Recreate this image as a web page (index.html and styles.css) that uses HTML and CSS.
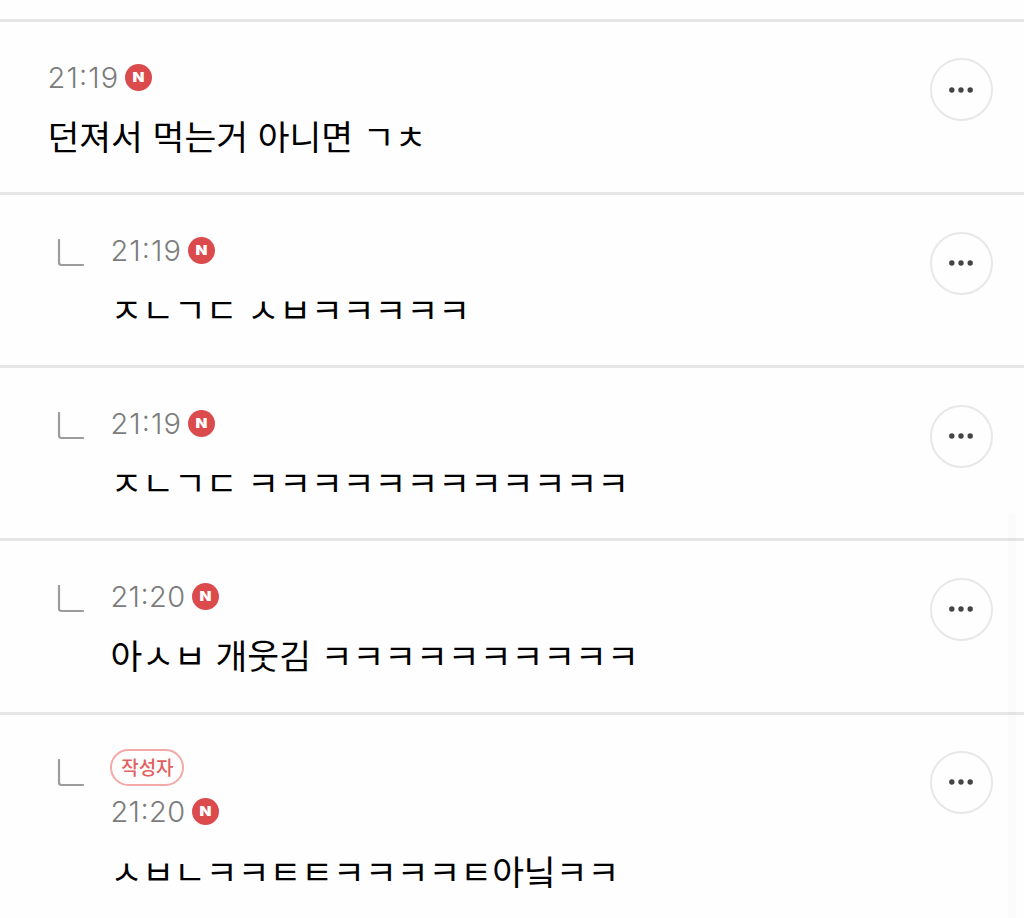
FILE: index.html
```
<!DOCTYPE html>
<html lang="ko">
<head>
    <meta charset="UTF-8">
    <title>댓글</title>
    <link rel="stylesheet" href="styles.css">
</head>
<body>
    <svg class="symbols">
        <symbol id="reply" viewBox="0 0 27 28">
            <path d="M2 1V23.5Q2 26 4.5 26H26" fill="none" stroke="#9c9c9c" stroke-width="2.2" stroke-linecap="round"/>
        </symbol>
        <symbol id="more" viewBox="0 0 26 6">
            <g fill="#444"><circle cx="3.8" cy="3" r="2.7"/><circle cx="13" cy="3" r="2.7"/><circle cx="22.2" cy="3" r="2.7"/></g>
        </symbol>
    </svg>
    <ul class="comment_list">
        <li>
            <div class="comment">
                <p class="info"><span class="time narrow">21:19</span><span class="new"><b>N</b></span></p>
                <p class="text">던져서 먹는거 아니면 ㄱㅊ</p>
            </div>
            <a class="more_btn"><svg><use href="#more"/></svg></a>
        </li>
        <li class="reply">
            <svg class="reply_icon"><use href="#reply"/></svg>
            <div class="comment">
                <p class="info"><span class="time narrow">21:19</span><span class="new"><b>N</b></span></p>
                <p class="text">ㅈㄴㄱㄷ ㅅㅂㅋㅋㅋㅋㅋ</p>
            </div>
            <a class="more_btn"><svg><use href="#more"/></svg></a>
        </li>
        <li class="reply">
            <svg class="reply_icon"><use href="#reply"/></svg>
            <div class="comment">
                <p class="info"><span class="time narrow">21:19</span><span class="new"><b>N</b></span></p>
                <p class="text">ㅈㄴㄱㄷ ㅋㅋㅋㅋㅋㅋㅋㅋㅋㅋㅋㅋ</p>
            </div>
            <a class="more_btn"><svg><use href="#more"/></svg></a>
        </li>
        <li class="reply">
            <svg class="reply_icon"><use href="#reply"/></svg>
            <div class="comment">
                <p class="info"><span class="time">21:20</span><span class="new"><b>N</b></span></p>
                <p class="text">아ㅅㅂ 개웃김 ㅋㅋㅋㅋㅋㅋㅋㅋㅋㅋ</p>
            </div>
            <a class="more_btn"><svg><use href="#more"/></svg></a>
        </li>
        <li class="reply">
            <svg class="reply_icon"><use href="#reply"/></svg>
            <div class="comment">
                <span class="writer">작성자</span>
                <p class="info"><span class="time">21:20</span><span class="new"><b>N</b></span></p>
                <p class="text">ㅅㅂㄴㅋㅋㅌㅌㅋㅋㅋㅋㅌ아닠ㅋㅋ</p>
            </div>
            <a class="more_btn"><svg><use href="#more"/></svg></a>
        </li>
    </ul>
    <div class="scrollbar"></div>
</body>
</html>
```

FILE: styles.css
```
html{
    font-family: "Noto Sans CJK KR",sans-serif;
    background: #fefefe;
}
body,ul,li,p{margin: 0;padding: 0;}
body{
    height: 918px;
    overflow: hidden;
}
li{list-style: none;}
svg{display: block}
.symbols{display: none}
.comment_list{
    padding-top: 19px;
}
.comment_list li{
    display: flex;
    align-items: flex-start;
    box-sizing: border-box;
    height: 173.15px;
    padding: 37px 31.5px 0 47.5px;
    border-top: 3px solid #e6e6e6;
}
.comment_list li:last-child{
    height: 220px;
}
.comment_list .reply{
    padding-left: 57px;
}
.reply_icon{
    width: 27px;
    height: 28px;
    margin: 7px 26.4px 0 0;
}
.comment{
    flex: 1;
}
.info{
    display: flex;
    align-items: center;
    height: 36px;
}
.time{
    padding-top: 1px;
    font: 300 29px/36px Inter,sans-serif;
    font-feature-settings: "case";
    letter-spacing: .4px;
    color: #7c7c7c;
}
.time.narrow{
    letter-spacing: 1.1px;
}
.new{
    width: 27px;
    height: 27px;
    margin-left: 6px;
    border-radius: 50%;
    font: 700 13.5px/26px Inter,sans-serif;
    text-align: center;
    color: #fff;
    background: #db4a4c;
}
.new b{
    display: block;
    transform: scaleX(1.15);
}
.text{
    margin-top: 15px;
    font-size: 34.6px;
    line-height: 50px;
    color: #000;
    white-space: nowrap;
}
.writer{
    display: block;
    box-sizing: border-box;
    width: 74px;
    height: 37px;
    margin: -3px 0 8px 0;
    border: 2px solid #f2a9a7;
    border-radius: 19px;
    font-size: 19px;
    font-weight: 500;
    line-height: 32px;
    text-align: center;
    color: #e2605f;
}
.more_btn{
    display: flex;
    align-items: center;
    justify-content: center;
    box-sizing: border-box;
    width: 63px;
    height: 63px;
    margin-top: -.6px;
    border: 2px solid #e8e8e8;
    border-radius: 50%;
    cursor: pointer;
}
.more_btn svg{
    width: 26px;
    height: 6px;
}
.scrollbar{
    position: absolute;
    top: 513px;
    right: 8px;
    bottom: 0;
    width: 8px;
    border-radius: 4px 4px 0 0;
    background: rgba(0,0,0,.012);
}
```
